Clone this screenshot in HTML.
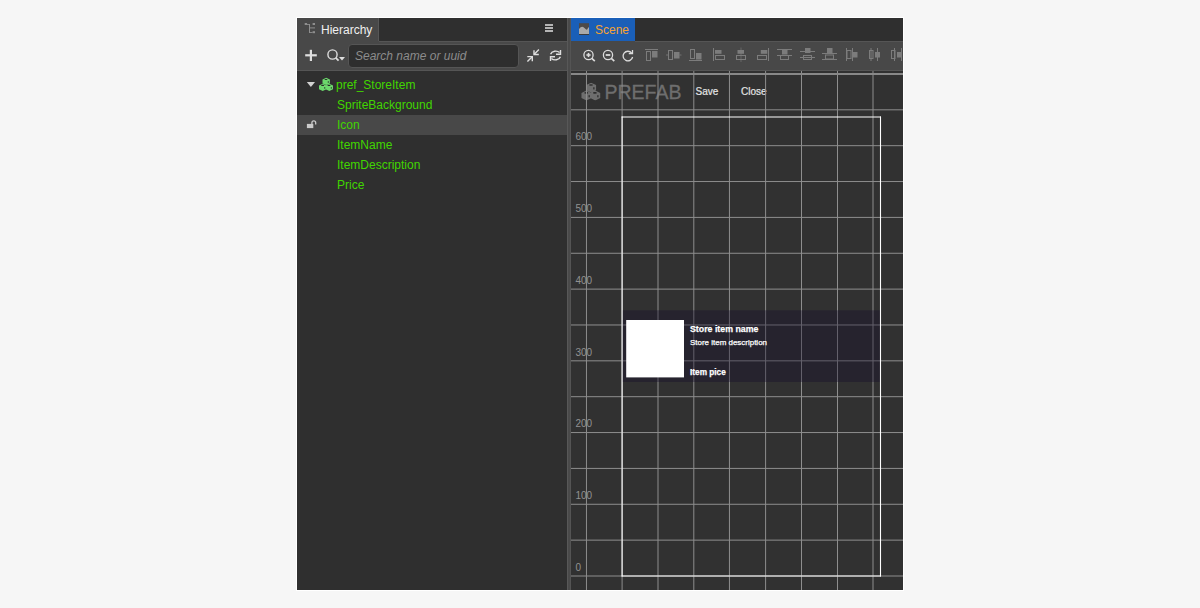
<!DOCTYPE html>
<html><head><meta charset="utf-8">
<style>
html,body{margin:0;padding:0;}
body{width:1200px;height:608px;background:#f6f6f6;overflow:hidden;position:relative;font-family:"Liberation Sans",sans-serif;}
div,svg,span{position:absolute;}
.t{white-space:nowrap;}
.row{left:297px;width:270px;height:20px;line-height:20px;font-size:12px;color:#41d600;}
.row span{left:40px;top:0;}
</style></head><body>
<svg width="0" height="0" style="left:0;top:0;"><defs>
<symbol id="cubes" viewBox="0 0 14 13.2">
  <path d="M3.5 1.7 L7.2 0 L10.9 1.7 V5.6 L7.2 7.3 L3.5 5.6 Z M0 7.6 L3.7 5.9 L7.4 7.6 V11.5 L3.7 13.2 L0 11.5 Z M6.6 7.6 L10.3 5.9 L14 7.6 V11.5 L10.3 13.2 L6.6 11.5 Z"/>
  <g fill="#2a2a2a">
    <ellipse cx="7.1" cy="1.7" rx="1.5" ry="0.6"/>
    <ellipse cx="3.6" cy="7.6" rx="1.5" ry="0.6"/>
    <ellipse cx="10" cy="7.6" rx="1.5" ry="0.6"/>
    <rect x="8.8" y="3.4" width="0.9" height="1.6"/>
    <rect x="5.3" y="9.3" width="0.9" height="1.6"/>
    <rect x="11.8" y="9.3" width="0.9" height="1.6"/>
  </g>
</symbol>
</defs></svg>
<!-- panel outline -->
<div style="left:296px;top:17px;width:608px;height:574px;background:#fff;"></div>
<div style="left:297px;top:18px;width:606px;height:572px;background:#2f2f2f;"></div>

<!-- ===== Hierarchy ===== -->
<div style="left:297px;top:18px;width:81px;height:23px;background:#484848;"></div>
<div style="left:378px;top:18px;width:1px;height:23px;background:#575757;"></div>
<div class="t" style="left:321px;top:19px;height:23px;line-height:23px;font-size:12px;color:#f0f0f0;">Hierarchy</div>
<div style="left:297px;top:41px;width:270px;height:29px;background:#484848;"></div>
<div style="left:379px;top:41px;width:188px;height:1px;background:#555;"></div>
<div style="left:297px;top:70px;width:270px;height:1px;background:#555;"></div>
<!-- search box -->
<div style="left:348px;top:44px;width:171px;height:24px;background:#2e2e2e;border:1px solid #555;border-radius:4px;box-sizing:border-box;"></div>
<div class="t" style="left:355px;top:44px;height:24px;line-height:24px;font-size:12px;font-style:italic;color:#8c8c8c;">Search name or uuid</div>

<div class="row" style="top:75px;"><span style="left:39px;">pref_StoreItem</span></div>
<div class="row" style="top:95px;"><span>SpriteBackground</span></div>
<div class="row" style="top:115px;background:#484848;"><span>Icon</span></div>
<div class="row" style="top:135px;"><span>ItemName</span></div>
<div class="row" style="top:155px;"><span>ItemDescription</span></div>
<div class="row" style="top:175px;"><span>Price</span></div>


<!-- hierarchy icons -->
<svg style="left:297px;top:18px;" width="270" height="53" viewBox="297 18 270 53">
  <!-- tree icon -->
  <g fill="#8e8e8e">
    <rect x="304.7" y="23" width="2.4" height="2"/>
    <rect x="307" y="24" width="2.5" height="0.9"/>
    <rect x="312.6" y="23" width="2.4" height="2"/>
    <rect x="309" y="24" width="1" height="9"/>
    <rect x="310" y="27.4" width="5" height="1"/>
    <rect x="312.6" y="31.2" width="2.4" height="2"/>
    <rect x="310" y="32" width="2.6" height="0.9"/>
  </g>
  <!-- hamburger -->
  <g fill="#b4b4b4">
    <rect x="545" y="24" width="8" height="2"/>
    <rect x="545" y="27" width="8" height="2"/>
    <rect x="545" y="30" width="8" height="2"/>
  </g>
  <!-- plus -->
  <g fill="#dedede">
    <rect x="305.2" y="54.2" width="11.6" height="2.2"/>
    <rect x="309.8" y="49.8" width="2.2" height="11.2"/>
  </g>
  <!-- search -->
  <g stroke="#dedede" fill="none" stroke-width="1.4">
    <circle cx="332.5" cy="54.5" r="4.6"/>
    <line x1="335.8" y1="57.8" x2="338.6" y2="60.6" stroke-width="1.8"/>
  </g>
  <path d="M339 57 L345 57 L342 60.6 Z" fill="#dedede"/>
  <!-- collapse -->
  <g stroke="#dedede" fill="none" stroke-width="1.4">
    <path d="M534 50.3 V54.5 H538.8"/>
    <line x1="534.3" y1="54.2" x2="538.9" y2="49.6"/>
    <path d="M527.3 56.6 H532.3 V61.2"/>
    <line x1="532" y1="56.9" x2="527.4" y2="61.5"/>
  </g>
  <!-- refresh -->
  <g stroke="#dedede" fill="none" stroke-width="1.4">
    <path d="M550.6 54.2 A5.2 4.2 0 0 1 559.6 52.6"/>
    <path d="M560.5 50 V54.3 H556"/>
    <path d="M560.4 56.8 A5.2 4.2 0 0 1 551.4 58.4"/>
    <path d="M550.5 61 V56.7 H555"/>
  </g>
</svg>
<!-- tree icons -->
<svg style="left:297px;top:71px;" width="270" height="70" viewBox="297 71 270 70">
  <path d="M306.8 82 H315 L310.9 87 Z" fill="#d2d2d2"/>
  <g id="pfab" fill="#6cd86c">
    <path d="M322.5 79.5 L326.2 77.8 L329.9 79.5 V83.4 L326.2 85.1 L322.5 83.4 Z"/>
    <path d="M319 85.4 L322.7 83.7 L326.4 85.4 V89.3 L322.7 91 L319 89.3 Z"/>
    <path d="M325.6 85.4 L329.3 83.7 L333 85.4 V89.3 L329.3 91 L325.6 89.3 Z"/>
  </g>
  <g fill="#2a2a2a">
    <ellipse cx="326" cy="79.5" rx="1.5" ry="0.6"/>
    <ellipse cx="322.6" cy="85.4" rx="1.5" ry="0.6"/>
    <ellipse cx="329" cy="85.4" rx="1.5" ry="0.6"/>
    <rect x="327.8" y="81.2" width="0.9" height="1.6"/>
    <rect x="324.3" y="87.1" width="0.9" height="1.6"/>
    <rect x="330.8" y="87.1" width="0.9" height="1.6"/>
  </g>
  <!-- lock -->
  <rect x="306.9" y="123.9" width="6.4" height="4.2" fill="#cacaca"/>
  <path d="M311.9 124 V122.8 A1.9 1.9 0 0 1 315.7 122.8 V124.6" stroke="#cacaca" stroke-width="1.3" fill="none"/>
</svg>

<!-- divider -->
<div style="left:567px;top:18px;width:4px;height:572px;background:#4a4a4a;"></div>
<div style="left:567px;top:18px;width:1px;height:572px;background:#585858;"></div>
<div style="left:570px;top:18px;width:1px;height:572px;background:#545454;"></div>

<!-- ===== Scene ===== -->
<div style="left:571px;top:18px;width:64px;height:23px;background:#1a5fb8;"></div>
<div class="t" style="left:595px;top:19px;height:23px;line-height:23px;font-size:12px;color:#f5a331;">Scene</div>
<div style="left:571px;top:41px;width:332px;height:29px;background:#484848;"></div>
<div style="left:635px;top:41px;width:268px;height:1px;background:#555;"></div>
<div style="left:571px;top:70px;width:332px;height:1px;background:#555;"></div>


<!-- scene tab icon -->
<svg style="left:576px;top:20px;" width="18" height="18" viewBox="576 20 18 18">
  <rect x="579" y="23.2" width="10" height="11.6" fill="#4d4a48"/>
  <path d="M579 34 V29 Q582 25 585 28.5 Q587 31 588 28 L589 27 V34 Z" fill="#a9a9a9"/>
  <rect x="579" y="34" width="10" height="0.8" fill="#3a3836"/>
</svg>
<!-- scene toolbar icons -->
<svg style="left:571px;top:41px;" width="332" height="29" viewBox="571 41 332 29">
  <g stroke="#dcdcdc" fill="none" stroke-width="1.3">
    <circle cx="588.5" cy="55" r="4.6"/>
    <line x1="591.8" y1="58.3" x2="594.8" y2="61.2" stroke-width="1.6"/>
    <line x1="586.4" y1="55" x2="590.6" y2="55" stroke-width="1.6"/>
    <line x1="588.5" y1="52.9" x2="588.5" y2="57.1" stroke-width="1.6"/>
    <circle cx="608" cy="55" r="4.6"/>
    <line x1="611.3" y1="58.3" x2="614.3" y2="61.2" stroke-width="1.6"/>
    <line x1="605.7" y1="55" x2="610.3" y2="55" stroke-width="1.8"/>
    <path d="M631.6 53 A4.8 4.8 0 1 0 632.6 57"/>
    <path d="M632.5 50 V53.6 H628.8"/>
  </g>
  <g stroke="#7c7c7c" fill="none" stroke-width="1">
    <!-- 1 align top -->
    <line x1="645" y1="49.5" x2="658" y2="49.5"/>
    <rect x="646.5" y="51.5" width="4" height="9"/>
    <!-- 2 align middle -->
    <rect x="668.5" y="50.5" width="4" height="9"/>
    <line x1="666" y1="55" x2="668.5" y2="55" stroke-width="0.8"/>
    <line x1="679.5" y1="55" x2="681.5" y2="55" stroke-width="0.8"/>
    <!-- 3 align bottom -->
    <line x1="689" y1="60.5" x2="702" y2="60.5"/>
    <rect x="690.5" y="49.5" width="4" height="9"/>
    <!-- 4 align left -->
    <line x1="713.5" y1="48" x2="713.5" y2="61"/>
    <rect x="715.5" y="55.5" width="9" height="4"/>
    <!-- 5 align center -->
    <line x1="741" y1="47.5" x2="741" y2="62" stroke-width="0.6"/>
    <rect x="736.5" y="55.5" width="9" height="4"/>
    <!-- 6 align right -->
    <line x1="768.5" y1="48" x2="768.5" y2="61"/>
    <rect x="757.5" y="55.5" width="9" height="4"/>
    <!-- 7 distribute top -->
    <line x1="777" y1="49.5" x2="792" y2="49.5"/>
    <line x1="777" y1="55.5" x2="792" y2="55.5"/>
    <rect x="780.5" y="55.5" width="8" height="4"/>
    <!-- 8 distribute middle -->
    <line x1="800" y1="51.5" x2="815" y2="51.5"/>
    <line x1="800" y1="57.5" x2="815" y2="57.5"/>
    <rect x="803.5" y="55.5" width="8" height="4"/>
    <!-- 9 distribute bottom -->
    <line x1="822" y1="53.5" x2="837" y2="53.5"/>
    <line x1="822" y1="59.5" x2="837" y2="59.5"/>
    <rect x="825.5" y="55" width="8" height="4"/>
    <!-- 10 distribute left -->
    <line x1="846.5" y1="48" x2="846.5" y2="61"/>
    <line x1="852.5" y1="48" x2="852.5" y2="61"/>
    <rect x="847" y="50.5" width="4" height="8"/>
    <!-- 11 distribute center -->
    <line x1="871" y1="48" x2="871" y2="61"/>
    <line x1="877.5" y1="48" x2="877.5" y2="61"/>
    <rect x="869.5" y="50.5" width="3.5" height="8"/>
    <!-- 12 distribute right -->
    <rect x="891.5" y="50.5" width="3.5" height="8"/>
    <line x1="894.5" y1="48" x2="894.5" y2="61"/>
    <line x1="901.5" y1="48" x2="901.5" y2="61"/>
  </g>
  <g fill="#7c7c7c">
    <rect x="652" y="51" width="5.5" height="6.5"/>
    <rect x="674" y="52" width="5.5" height="6.5"/>
    <rect x="696" y="53" width="5.5" height="6.5"/>
    <rect x="715" y="50" width="6.5" height="3.8"/>
    <rect x="737.5" y="50" width="6.5" height="3.8"/>
    <rect x="760.8" y="50" width="6.5" height="3.8"/>
    <rect x="782" y="50" width="5.5" height="4.5"/>
    <rect x="805" y="48" width="5.5" height="5"/>
    <rect x="827" y="48" width="5.5" height="5"/>
    <rect x="853" y="52" width="4.5" height="5.5"/>
    <rect x="875" y="52" width="5" height="5.5"/>
    <rect x="897" y="52" width="4.5" height="5.5"/>
  </g>
</svg>

<svg style="left:571px;top:71px;" width="332" height="519" viewBox="571 71 332 519">
  <rect x="571" y="71" width="332" height="519" fill="#313131"/>

  <!-- watermark -->
  <g fill="#6e6e6e">
    <use href="#cubes" x="580.5" y="82.7" width="20.7" height="17.7"/>
  </g>
  <text x="604.5" y="98.7" font-family="Liberation Sans" font-size="20.4" fill="#6e6e6e" stroke="#6e6e6e" stroke-width="0.3" textLength="77" lengthAdjust="spacingAndGlyphs">PREFAB</text>
  <text x="695.6" y="94.6" font-family="Liberation Sans" font-size="10" fill="#e4e4e4" stroke="#e4e4e4" stroke-width="0.2">Save</text>
  <text x="741" y="94.6" font-family="Liberation Sans" font-size="10" fill="#e4e4e4" stroke="#e4e4e4" stroke-width="0.2">Close</text>
  <g font-family="Liberation Sans" font-size="10" fill="#929292">
    <text x="575.5" y="140.4">600</text>
    <text x="575.5" y="212.1">500</text>
    <text x="575.5" y="283.8">400</text>
    <text x="575.5" y="355.5">300</text>
    <text x="575.5" y="427.2">200</text>
    <text x="575.5" y="498.9">100</text>
    <text x="575.5" y="570.6">0</text>
  </g>
  <g stroke="#8e8e8e" stroke-width="1" fill="none">
<line x1="586.46" y1="71" x2="586.46" y2="590"/>
<line x1="622.10" y1="71" x2="622.10" y2="590"/>
<line x1="658.00" y1="71" x2="658.00" y2="590"/>
<line x1="693.80" y1="71" x2="693.80" y2="590"/>
<line x1="729.45" y1="71" x2="729.45" y2="590"/>
<line x1="765.60" y1="71" x2="765.60" y2="590"/>
<line x1="801.50" y1="71" x2="801.50" y2="590"/>
<line x1="837.50" y1="71" x2="837.50" y2="590"/>
<line x1="873.00" y1="71" x2="873.00" y2="590"/>
<line x1="571" y1="576.00" x2="903" y2="576.00"/>
<line x1="571" y1="540.14" x2="903" y2="540.14"/>
<line x1="571" y1="504.28" x2="903" y2="504.28"/>
<line x1="571" y1="468.42" x2="903" y2="468.42"/>
<line x1="571" y1="432.56" x2="903" y2="432.56"/>
<line x1="571" y1="396.70" x2="903" y2="396.70"/>
<line x1="571" y1="360.84" x2="903" y2="360.84"/>
<line x1="571" y1="324.98" x2="903" y2="324.98"/>
<line x1="571" y1="289.12" x2="903" y2="289.12"/>
<line x1="571" y1="253.26" x2="903" y2="253.26"/>
<line x1="571" y1="217.40" x2="903" y2="217.40"/>
<line x1="571" y1="181.54" x2="903" y2="181.54"/>
<line x1="571" y1="145.68" x2="903" y2="145.68"/>
<line x1="571" y1="109.82" x2="903" y2="109.82"/>
  </g>
  <rect x="571" y="73" width="332" height="2" fill="#888888"/>
  <rect x="622" y="310.3" width="258" height="71.7" fill="rgb(19,11,42)" fill-opacity="0.35"/>
  <g stroke="#ffffff" stroke-width="1.1">
    <line x1="622.1" y1="116.45" x2="622.1" y2="576.55"/>
    <line x1="880.5" y1="116.45" x2="880.5" y2="576.55"/>
    <line x1="621.55" y1="117" x2="881" y2="117"/>
    <line x1="621.55" y1="576" x2="881" y2="576"/>
  </g>
  <rect x="626.2" y="320" width="57.8" height="57.4" fill="#ffffff"/>
  <g font-family="Liberation Sans" fill="#ffffff" stroke="#ffffff" stroke-width="0.25">
    <text x="690" y="332.3" font-size="9.6" font-weight="bold" textLength="68.4" lengthAdjust="spacingAndGlyphs">Store item name</text>
    <text x="690" y="345.1" font-size="8" textLength="77" lengthAdjust="spacingAndGlyphs">Store item description</text>
    <text x="690" y="375.2" font-size="8.8" font-weight="bold" textLength="35.8" lengthAdjust="spacingAndGlyphs">Item pice</text>
  </g>

</svg>
</body></html>
